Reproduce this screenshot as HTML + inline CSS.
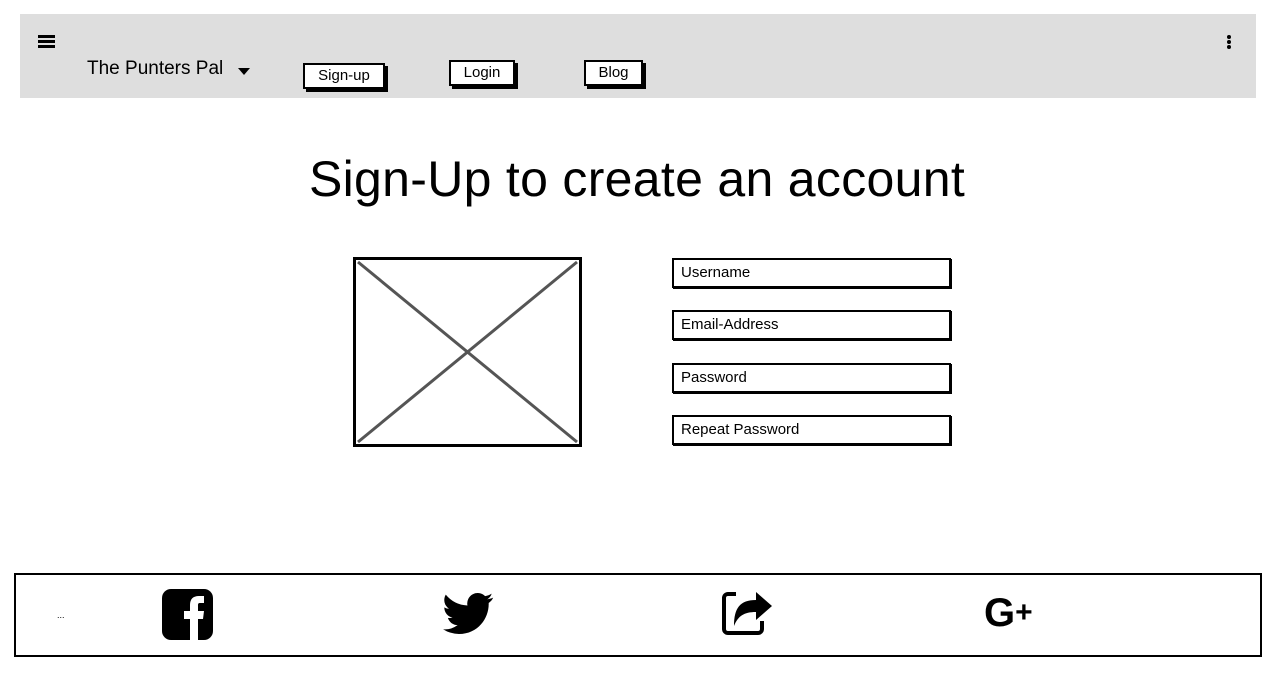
<!DOCTYPE html>
<html><head><meta charset="utf-8"><style>
body{margin:0;width:1276px;height:678px;background:#fff;position:relative;font-family:"Liberation Sans",sans-serif;overflow:hidden}
.abs{position:absolute}
.bar{left:20px;top:14px;width:1236px;height:84px;background:#dedede}
.btn{position:absolute;background:#fff;border:2px solid #000;box-shadow:3px 3px 0 #000;font-size:15px;text-align:center;line-height:22px;height:22px}
.inp{position:absolute;left:672px;border:2px solid #000;font-size:15px;line-height:25px;padding-left:7px;box-sizing:border-box;width:279px;height:30px;box-shadow:1px 1px 0 #000}
</style></head><body>
<div class="abs bar"></div>
<div class="abs" style="left:38px;top:35px;width:17px;height:3px;background:#000;box-shadow:0 5px 0 #000,0 10px 0 #000"></div>
<div class="abs" style="left:1227px;top:35px;width:4px;height:4px;background:#000;border-radius:2px;box-shadow:0 5px 0 #000,0 10px 0 #000"></div>
<div class="abs" style="left:87px;top:58px;font-size:19px">The Punters Pal</div>
<div class="abs" style="left:238px;top:68px;border-left:6px solid transparent;border-right:6px solid transparent;border-top:7px solid #000"></div>
<div class="btn" style="left:303px;top:63px;width:78px">Sign-up</div>
<div class="btn" style="left:449px;top:60px;width:62px">Login</div>
<div class="btn" style="left:584px;top:60px;width:55px">Blog</div>
<div class="abs" style="left:309px;top:150px;font-size:50px;letter-spacing:0.3px;white-space:nowrap">Sign-Up to create an account</div>
<svg class="abs" style="left:353px;top:257px" width="229" height="190"><rect x="1.5" y="1.5" width="226" height="187" fill="#fff" stroke="#000" stroke-width="3"/><line x1="5" y1="5" x2="224" y2="185" stroke="#555" stroke-width="3"/><line x1="224" y1="5" x2="5" y2="185" stroke="#555" stroke-width="3"/></svg>
<div class="inp" style="top:258px">Username</div>
<div class="inp" style="top:310px">Email-Address</div>
<div class="inp" style="top:363px">Password</div>
<div class="inp" style="top:415px">Repeat Password</div>
<div class="abs" style="left:14px;top:573px;width:1244px;height:80px;border:2px solid #000"></div>
<div class="abs" style="left:57px;top:610px;font-size:9px">...</div>
<svg class="abs" style="left:162px;top:589px" width="51" height="51"><rect x="0" y="0" width="51" height="51" rx="9" fill="#000"/><path d="M28 51V30h-6v-8h6v-6c0-6 3-9 9-9h5v7h-4c-2 0-2 1-2 3v5h6l-1 8h-5v21z" fill="#fff"/></svg>
<svg class="abs" style="left:443px;top:592px" width="51" height="44" viewBox="0 0 24 20"><path d="M23.6 2.3c-.9.4-1.8.6-2.8.8 1-.6 1.8-1.6 2.1-2.7-.9.6-2 1-3.1 1.2A4.9 4.9 0 0 0 11.5 6 14 14 0 0 1 1.3.9a4.9 4.9 0 0 0 1.5 6.6c-.8 0-1.6-.2-2.2-.6 0 2.4 1.7 4.4 3.9 4.8-.7.2-1.5.2-2.2.1.6 2 2.4 3.4 4.6 3.4A9.9 9.9 0 0 1 0 17.2 14 14 0 0 0 7.5 19.4c9.1 0 14-7.5 14-14v-.6c1-.7 1.8-1.6 2.1-2.5z"/></svg>
<svg class="abs" style="left:720px;top:584px" width="58" height="52"><path d="M16 10H8a4 4 0 0 0-4 4v31a4 4 0 0 0 4 4h30a4 4 0 0 0 4-4v-8" fill="none" stroke="#000" stroke-width="4"/><path d="M14 42c0-18 6-26 22-26v-8l16 14-16 14v-8c-12 0-18 4-22 14z" fill="#000"/></svg>
<div class="abs" style="left:984px;top:591px;font-size:40px;font-weight:bold;white-space:nowrap">G<span style="font-size:30px;position:relative;top:-4px">+</span></div>
</body></html>
